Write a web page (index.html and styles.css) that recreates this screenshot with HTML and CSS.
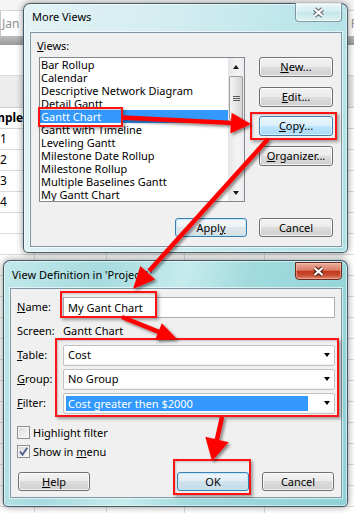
FILE: index.html
```html
<!DOCTYPE html>
<html>
<head>
<meta charset="utf-8">
<title>More Views</title>
<link rel="stylesheet" href="styles.css">
</head>
<body>
<div class="desktop">
  <div class="app">
    <div class="app-top"><span class="ribbon-label">Reschedule view</span></div>
    <div class="timescale"><span class="ts-month">Jan</span><span class="ts-month ts-next">F</span></div>
    <div class="scalebar"></div>
    <div class="blank"></div>
    <div class="band"></div>
    <div class="colhead"><span class="colhead-text">Complete</span></div>
    <div class="grid">
      <div class="row"><span class="cell c1">1</span><span class="cell c2"></span><span class="cell c3"></span><span class="cell c4"></span><span class="cell c5"></span></div>
      <div class="row"><span class="cell c1">2</span><span class="cell c2"></span><span class="cell c3"></span><span class="cell c4"></span><span class="cell c5"></span></div>
      <div class="row"><span class="cell c1">3</span><span class="cell c2"></span><span class="cell c3"></span><span class="cell c4"></span><span class="cell c5"></span></div>
      <div class="row"><span class="cell c1">4</span><span class="cell c2"></span><span class="cell c3"></span><span class="cell c4"></span><span class="cell c5"></span></div>
      <div class="row"><span class="cell c1"></span><span class="cell c2"></span><span class="cell c3"></span><span class="cell c4"></span><span class="cell c5"></span></div>
      <div class="row"><span class="cell c1"></span><span class="cell c2"></span><span class="cell c3"></span><span class="cell c4"></span><span class="cell c5"></span></div>
      <div class="row"><span class="cell c1"></span><span class="cell c2"></span><span class="cell c3"></span><span class="cell c4"></span><span class="cell c5"></span></div>
      <div class="row"><span class="cell c1"></span><span class="cell c2"></span><span class="cell c3"></span><span class="cell c4"></span><span class="cell c5"></span></div>
      <div class="row"><span class="cell c1"></span><span class="cell c2"></span><span class="cell c3"></span><span class="cell c4"></span><span class="cell c5"></span></div>
      <div class="row"><span class="cell c1"></span><span class="cell c2"></span><span class="cell c3"></span><span class="cell c4"></span><span class="cell c5"></span></div>
      <div class="row"><span class="cell c1"></span><span class="cell c2"></span><span class="cell c3"></span><span class="cell c4"></span><span class="cell c5"></span></div>
      <div class="row"><span class="cell c1"></span><span class="cell c2"></span><span class="cell c3"></span><span class="cell c4"></span><span class="cell c5"></span></div>
      <div class="row"><span class="cell c1"></span><span class="cell c2"></span><span class="cell c3"></span><span class="cell c4"></span><span class="cell c5"></span></div>
      <div class="row"><span class="cell c1"></span><span class="cell c2"></span><span class="cell c3"></span><span class="cell c4"></span><span class="cell c5"></span></div>
      <div class="row"><span class="cell c1"></span><span class="cell c2"></span><span class="cell c3"></span><span class="cell c4"></span><span class="cell c5"></span></div>
      <div class="row"><span class="cell c1"></span><span class="cell c2"></span><span class="cell c3"></span><span class="cell c4"></span><span class="cell c5"></span></div>
      <div class="row"><span class="cell c1"></span><span class="cell c2"></span><span class="cell c3"></span><span class="cell c4"></span><span class="cell c5"></span></div>
      <div class="row"><span class="cell c1"></span><span class="cell c2"></span><span class="cell c3"></span><span class="cell c4"></span><span class="cell c5"></span></div>
      <div class="row"><span class="cell c1"></span><span class="cell c2"></span><span class="cell c3"></span><span class="cell c4"></span><span class="cell c5"></span></div>
    </div>
  </div>

  <section class="win win-more">
    <div class="titlebar">
      <span class="title">More Views</span>
      <span class="close close-inactive">
        <svg class="x-glyph" width="13" height="11" viewBox="0 0 13 11"><path d="M2.5 2 L10.5 9 M10.5 2 L2.5 9" stroke="#6b7378" stroke-width="4.4" fill="none"/><path d="M2.5 2 L10.5 9 M10.5 2 L2.5 9" stroke="#ffffff" stroke-width="2.2" fill="none"/></svg>
      </span>
    </div>
    <div class="client">
      <div class="mv-main">
        <div class="mv-left">
          <div class="mv-label"><u>V</u>iews:</div>
          <div class="listbox">
            <ul class="list">
              <li>Bar Rollup</li>
              <li>Calendar</li>
              <li>Descriptive Network Diagram</li>
              <li>Detail Gantt</li>
              <li class="sel">Gantt Chart</li>
              <li>Gantt with Timeline</li>
              <li>Leveling Gantt</li>
              <li>Milestone Date Rollup</li>
              <li>Milestone Rollup</li>
              <li>Multiple Baselines Gantt</li>
              <li>My Gantt Chart</li>
            </ul>
            <div class="vscroll">
              <span class="sb-btn"><span class="tri-up"></span></span>
              <span class="sb-thumb"><span class="grip"></span></span>
              <span class="sb-track"></span>
              <span class="sb-btn"><span class="tri-down"></span></span>
            </div>
          </div>
        </div>
        <div class="mv-buttons">
          <button class="btn btn-col"><u>N</u>ew...</button>
          <button class="btn btn-col"><u>E</u>dit...</button>
          <button class="btn btn-col btn-hot"><u>C</u>opy...</button>
          <button class="btn btn-col"><u>O</u>rganizer...</button>
        </div>
      </div>
      <div class="mv-foot">
        <button class="btn btn-apply btn-default">Appl<u>y</u></button>
        <button class="btn btn-cancel">Cancel</button>
      </div>
    </div>
  </section>

  <section class="win win-def">
    <div class="titlebar">
      <span class="title">View Definition in 'Project1'</span>
      <span class="close close-active">
        <svg class="x-glyph" width="13" height="11" viewBox="0 0 13 11"><path d="M2.5 2 L10.5 9 M10.5 2 L2.5 9" stroke="#5a2418" stroke-width="4.4" fill="none"/><path d="M2.5 2 L10.5 9 M10.5 2 L2.5 9" stroke="#ffffff" stroke-width="2.2" fill="none"/></svg>
      </span>
    </div>
    <div class="client">
      <div class="vd-form">
        <span class="vd-label"><u>N</u>ame:</span>
        <div class="textbox">My Gant Chart</div>
        <span class="vd-label">Screen:</span>
        <span class="vd-static">Gantt Chart</span>
        <span class="vd-label"><u>T</u>able:</span>
        <div class="combo"><span class="combo-text">Cost</span><span class="caret"></span></div>
        <span class="vd-label"><u>G</u>roup:</span>
        <div class="combo"><span class="combo-text">No Group</span><span class="caret"></span></div>
        <span class="vd-label"><u>F</u>ilter:</span>
        <div class="combo combo-focus"><span class="combo-sel">Cost greater then $2000</span><span class="caret"></span></div>
      </div>
      <div class="vd-checks">
        <div class="check-row"><span class="checkbox"></span><span>Highlight filter</span></div>
        <div class="check-row"><span class="checkbox"><svg width="11" height="11" viewBox="0 0 11 11"><path d="M2 5.5 L4.5 8.8 L9.2 1.8" stroke="#4a5c8e" stroke-width="1.8" fill="none"/></svg></span><span>Show in <u>m</u>enu</span></div>
      </div>
      <div class="vd-foot">
        <button class="btn btn-foot"><u>H</u>elp</button>
        <span class="spacer"></span>
        <button class="btn btn-foot btn-ok">OK</button>
        <button class="btn btn-foot">Cancel</button>
      </div>
    </div>
  </section>

  <div class="mark mark-gantt"></div>
  <div class="mark mark-copy"></div>
  <div class="mark mark-name"></div>
  <div class="mark mark-fields"></div>
  <div class="mark mark-ok"></div>

  <svg class="arrows" width="354" height="513" viewBox="0 0 354 513">
    <defs>
      <filter id="sh" x="-30%" y="-30%" width="160%" height="160%">
        <feDropShadow dx="2" dy="2" stdDeviation="1.4" flood-color="#000" flood-opacity="0.45"/>
      </filter>
    </defs>
    <g filter="url(#sh)">
      <line x1="122" y1="117.5" x2="233" y2="123" stroke="#f00" stroke-width="4.5"/>
      <polygon points="251,124 230.3,133.5 231.6,112.8" fill="#f00"/>
      <line x1="268" y1="139" x2="149" y2="271" stroke="#f00" stroke-width="4.5"/>
      <polygon points="133,289 155.1,279.4 140.3,266" fill="#f00"/>
      <line x1="122" y1="317" x2="160" y2="332.3" stroke="#f00" stroke-width="4.5"/>
      <polygon points="177,339 155.1,340 161.8,323.2" fill="#f00"/>
      <line x1="222" y1="417" x2="216.6" y2="441" stroke="#f00" stroke-width="4.5"/>
      <polygon points="212,461 228.7,442.2 205.3,436.8" fill="#f00"/>
    </g>
  </svg>
</div>
</body>
</html>
```
FILE: styles.css
```css
* { box-sizing: border-box; margin: 0; padding: 0; }
html, body { width: 354px; height: 513px; overflow: hidden; }
body {
  font-family: "Noto Sans", "Open Sans", sans-serif;
  font-size: 11px;
  color: #000;
  background: #fff;
}
u { text-decoration: underline; text-underline-offset: 1px; }

.desktop { position: relative; width: 354px; height: 513px; overflow: hidden; }

/* ---------- background application ---------- */
.app { width: 354px; height: 513px; display: flex; flex-direction: column; background: #fff; }
.app-top { height: 11px; background: #f5f5f5; border-bottom: 1px solid #d6d6d6; overflow: hidden; }
.ribbon-label { display: block; margin: -11px 0 0 112px; color: #9a9a9a; font-size: 11px; line-height: 14px; }
.timescale {
  height: 25px; display: flex; justify-content: space-between; align-items: center;
  color: #909090; font-size: 12px; border-left: 1px solid #c8c8c8;
}
.ts-month { padding-left: 1px; }
.ts-next { margin-right: -3px; }
.scalebar { height: 9px; background: linear-gradient(#bdbdbd, #9a9a9a); }
.blank { height: 30px; }
.band { height: 33px; background: #ececec; border-top: 1px solid #dcdcdc; border-bottom: 1px solid #d0d0d0; }
.colhead {
  height: 21px; border-bottom: 1px solid #d4d4d4; font-weight: bold; font-size: 12px;
  line-height: 20px; white-space: nowrap; overflow: hidden;
}
.colhead-text { display: inline-block; margin-left: -22px; }
.grid { flex: 1; overflow: hidden; }
.row { display: flex; height: 21px; border-bottom: 1px solid #dcdcdc; }
.cell { height: 20px; border-right: 1px solid #dcdcdc; line-height: 20px; font-size: 12px; }
.c1 { width: 35px; }
.c2 { width: 72px; }
.c3 { width: 78px; }
.c4 { width: 80px; }
.c5 { flex: 1; border-right: 0; }

/* ---------- windows ---------- */
.win {
  position: absolute;
  display: flex; flex-direction: column;
  border: 1px solid rgba(35, 55, 65, 0.8);
  border-radius: 7px 7px 5px 5px;
  box-shadow: 0 0 7px rgba(0, 0, 0, 0.45), inset 0 0 0 1px rgba(255, 255, 255, 0.55);
}
.win-more {
  left: 23px; top: 3px; width: 325px; height: 250px;
  padding: 0 5px 5px 6px;
  background: linear-gradient(100deg, #e3f2f5 0%, #d4edf1 40%, #c0e7eb 70%, #aee0e5 100%);
}
.win-def {
  left: 3px; top: 260px; width: 345px; height: 247px;
  padding: 0 5px 8px 6px;
  background: linear-gradient(105deg, #c2e8eb 0%, #a6dbdf 25%, #c6ebed 45%, #a0dadd 62%, #8fd2d6 100%);
}
.titlebar { display: flex; justify-content: space-between; align-items: flex-start; }
.win-more .titlebar { height: 28px; }
.win-def .titlebar { height: 27px; }
.title { font-size: 11px; line-height: 16px; white-space: nowrap; }
.win-more .title { margin: 5px 0 0 2px; }
.win-def .title { margin: 6px 0 0 2px; }

.close { width: 47px; display: flex; align-items: center; justify-content: center; border-radius: 0 0 4px 4px; }
.close-inactive {
  height: 19px; margin-top: -1px;
  border: 1px solid rgba(70, 90, 100, 0.6); border-top: 0;
  background: linear-gradient(rgba(255,255,255,0.7) 0%, rgba(255,255,255,0.35) 50%, rgba(210,230,235,0.35) 51%, rgba(255,255,255,0.55) 100%);
  box-shadow: inset 0 0 0 1px rgba(255,255,255,0.5);
}
.close-active {
  height: 18px; margin-top: 1px;
  border: 1px solid #6b2a1e;
  background: linear-gradient(#eab0a0 0%, #db7c66 45%, #c2381c 52%, #c84a30 75%, #e0886c 100%);
  box-shadow: inset 0 0 0 1px rgba(255, 200, 180, 0.5);
}

.client {
  flex: 1;
  display: flex; flex-direction: column;
  background: #f0f0f0;
  border: 1px solid #7f97a3;
  box-shadow: 0 0 0 1px rgba(255, 255, 255, 0.6);
}

/* ---------- More Views ---------- */
.mv-main { display: flex; padding: 6px 8px 0 8px; }
.mv-left { width: 206px; display: flex; flex-direction: column; }
.mv-label { margin-left: -2px; line-height: 14px; height: 14px; }
.listbox {
  margin-top: 4px; height: 145px;
  display: flex; overflow: hidden;
  border: 1px solid #828790; background: #fff;
}
.list { list-style: none; flex: 1; overflow: hidden; }
.list li { height: 13px; line-height: 13px; padding-left: 1px; white-space: nowrap; }
.list li.sel { background: #3399ff; color: #fff; }
.vscroll {
  width: 16px; display: flex; flex-direction: column;
  background: linear-gradient(to right, #e6e6e8, #f4f4f5 60%, #ececee);
}
.sb-btn { height: 17px; display: flex; align-items: center; justify-content: center; }
.tri-up { width: 0; height: 0; border-left: 3.5px solid transparent; border-right: 3.5px solid transparent; border-bottom: 4px solid #1a1a1a; }
.tri-down { width: 0; height: 0; border-left: 3.5px solid transparent; border-right: 3.5px solid transparent; border-top: 4px solid #1a1a1a; }
.sb-thumb {
  height: 44px; margin: 1px 1px 0;
  border: 1px solid #9a9a9a; border-radius: 2px;
  background: linear-gradient(to right, #f6f6f6, #e4e4e4 50%, #d6d6d6);
  display: flex; align-items: center; justify-content: center;
}
.grip {
  width: 7px; height: 5px;
  background: repeating-linear-gradient(#5a5a5a 0, #5a5a5a 1px, transparent 1px, transparent 2px);
}
.sb-track { flex: 1; }

.mv-buttons { width: 74px; margin-left: 14px; padding-top: 18px; display: flex; flex-direction: column; gap: 9.6px; }
.mv-foot { display: flex; justify-content: flex-end; gap: 12px; padding-right: 8px; margin-top: 16px; }

/* ---------- buttons ---------- */
.btn {
  font: inherit; font-size: 11px; color: #000;
  display: flex; align-items: center; justify-content: center;
  line-height: 14px;
  border: 1px solid #707070; border-radius: 3px;
  background: linear-gradient(#f2f2f2 0%, #ebebeb 49%, #dddddd 50%, #cfcfcf 100%);
  box-shadow: inset 0 0 0 1px rgba(255, 255, 255, 0.75);
  appearance: none;
}
.btn-col { height: 20px; width: 74px; }
.btn-apply { width: 72px; height: 19px; }
.btn-cancel { width: 74px; height: 19px; }
.btn-default {
  border-color: #3c7fb1;
  background: linear-gradient(#f4f8fa 0%, #eef3f6 49%, #e0e7ec 50%, #d6dee4 100%);
  box-shadow: inset 0 0 0 1px #c4eafa;
}
.btn-hot {
  border-color: #3c7fb1;
  background: linear-gradient(#eaf6fd 0%, #d9f0fc 49%, #bee6fd 50%, #a7d9f5 100%);
  box-shadow: inset 0 0 0 1px rgba(255, 255, 255, 0.6);
}
.btn-ok {
  border-color: #3c7fb1;
  background: linear-gradient(#ecf4f8 0%, #e2eef5 49%, #d0e3ee 50%, #c4dbe8 100%);
  box-shadow: inset 0 0 0 1px #c4eafa;
}

/* ---------- View Definition ---------- */
.vd-form {
  display: grid;
  grid-template-columns: 46px 1fr;
  grid-auto-rows: 24px;
  align-items: center;
  padding: 6px 6px 0 6px;
}
.vd-label { line-height: 14px; white-space: nowrap; }
.vd-static { line-height: 14px; }
.textbox {
  height: 21px; line-height: 19px; padding-left: 4px;
  background: #fff; border: 1px solid #abadb3;
}
.combo {
  height: 21px; display: flex; align-items: center;
  padding-left: 4px;
  background: #fff; border: 1px solid #c2c2c2; border-radius: 2px;
  box-shadow: inset 0 -1px 0 #f4f4f4;
}
.combo-text { flex: 1; line-height: 14px; }
.combo-focus { padding: 2px 0 2px 2px; }
.combo-sel { flex: 1; height: 15px; line-height: 15px; padding-left: 2px; background: #3399ff; color: #fff; margin-right: 16px; }
.caret {
  width: 0; height: 0; margin-right: 4px;
  border-left: 3.5px solid transparent; border-right: 3.5px solid transparent; border-top: 4px solid #000;
}

.vd-checks { margin-top: 8px; padding-left: 6px; display: flex; flex-direction: column; }
.check-row { height: 19px; display: flex; align-items: center; gap: 3px; line-height: 14px; }
.checkbox {
  width: 13px; height: 13px;
  display: flex; align-items: center; justify-content: center;
  border: 1px solid #8e8f8f;
  background: linear-gradient(135deg, #d4d5d7 0%, #eeeeef 60%, #fbfbfb 100%);
  box-shadow: inset 0 0 0 1px #f6f6f6;
}

.vd-foot { display: flex; align-items: center; padding: 0 7px; margin-top: 11px; gap: 13px; }
.btn-foot { width: 72px; height: 19px; }
.spacer { flex: 1; }

/* ---------- annotations ---------- */
.mark {
  position: absolute;
  border: 2px solid #ff1414;
  box-shadow: 2px 2px 3px rgba(0, 0, 0, 0.35), inset 1px 1px 2px rgba(0, 0, 0, 0.2);
}
.mark-gantt { left: 38px; top: 107px; width: 85px; height: 20px; }
.mark-copy { left: 250px; top: 112px; width: 87px; height: 28px; }
.mark-name { left: 60px; top: 291px; width: 97px; height: 27px; }
.mark-fields { left: 55px; top: 338px; width: 284px; height: 79px; }
.mark-ok { left: 173px; top: 459px; width: 78px; height: 36px; }

.arrows { position: absolute; left: 0; top: 0; pointer-events: none; }
```
